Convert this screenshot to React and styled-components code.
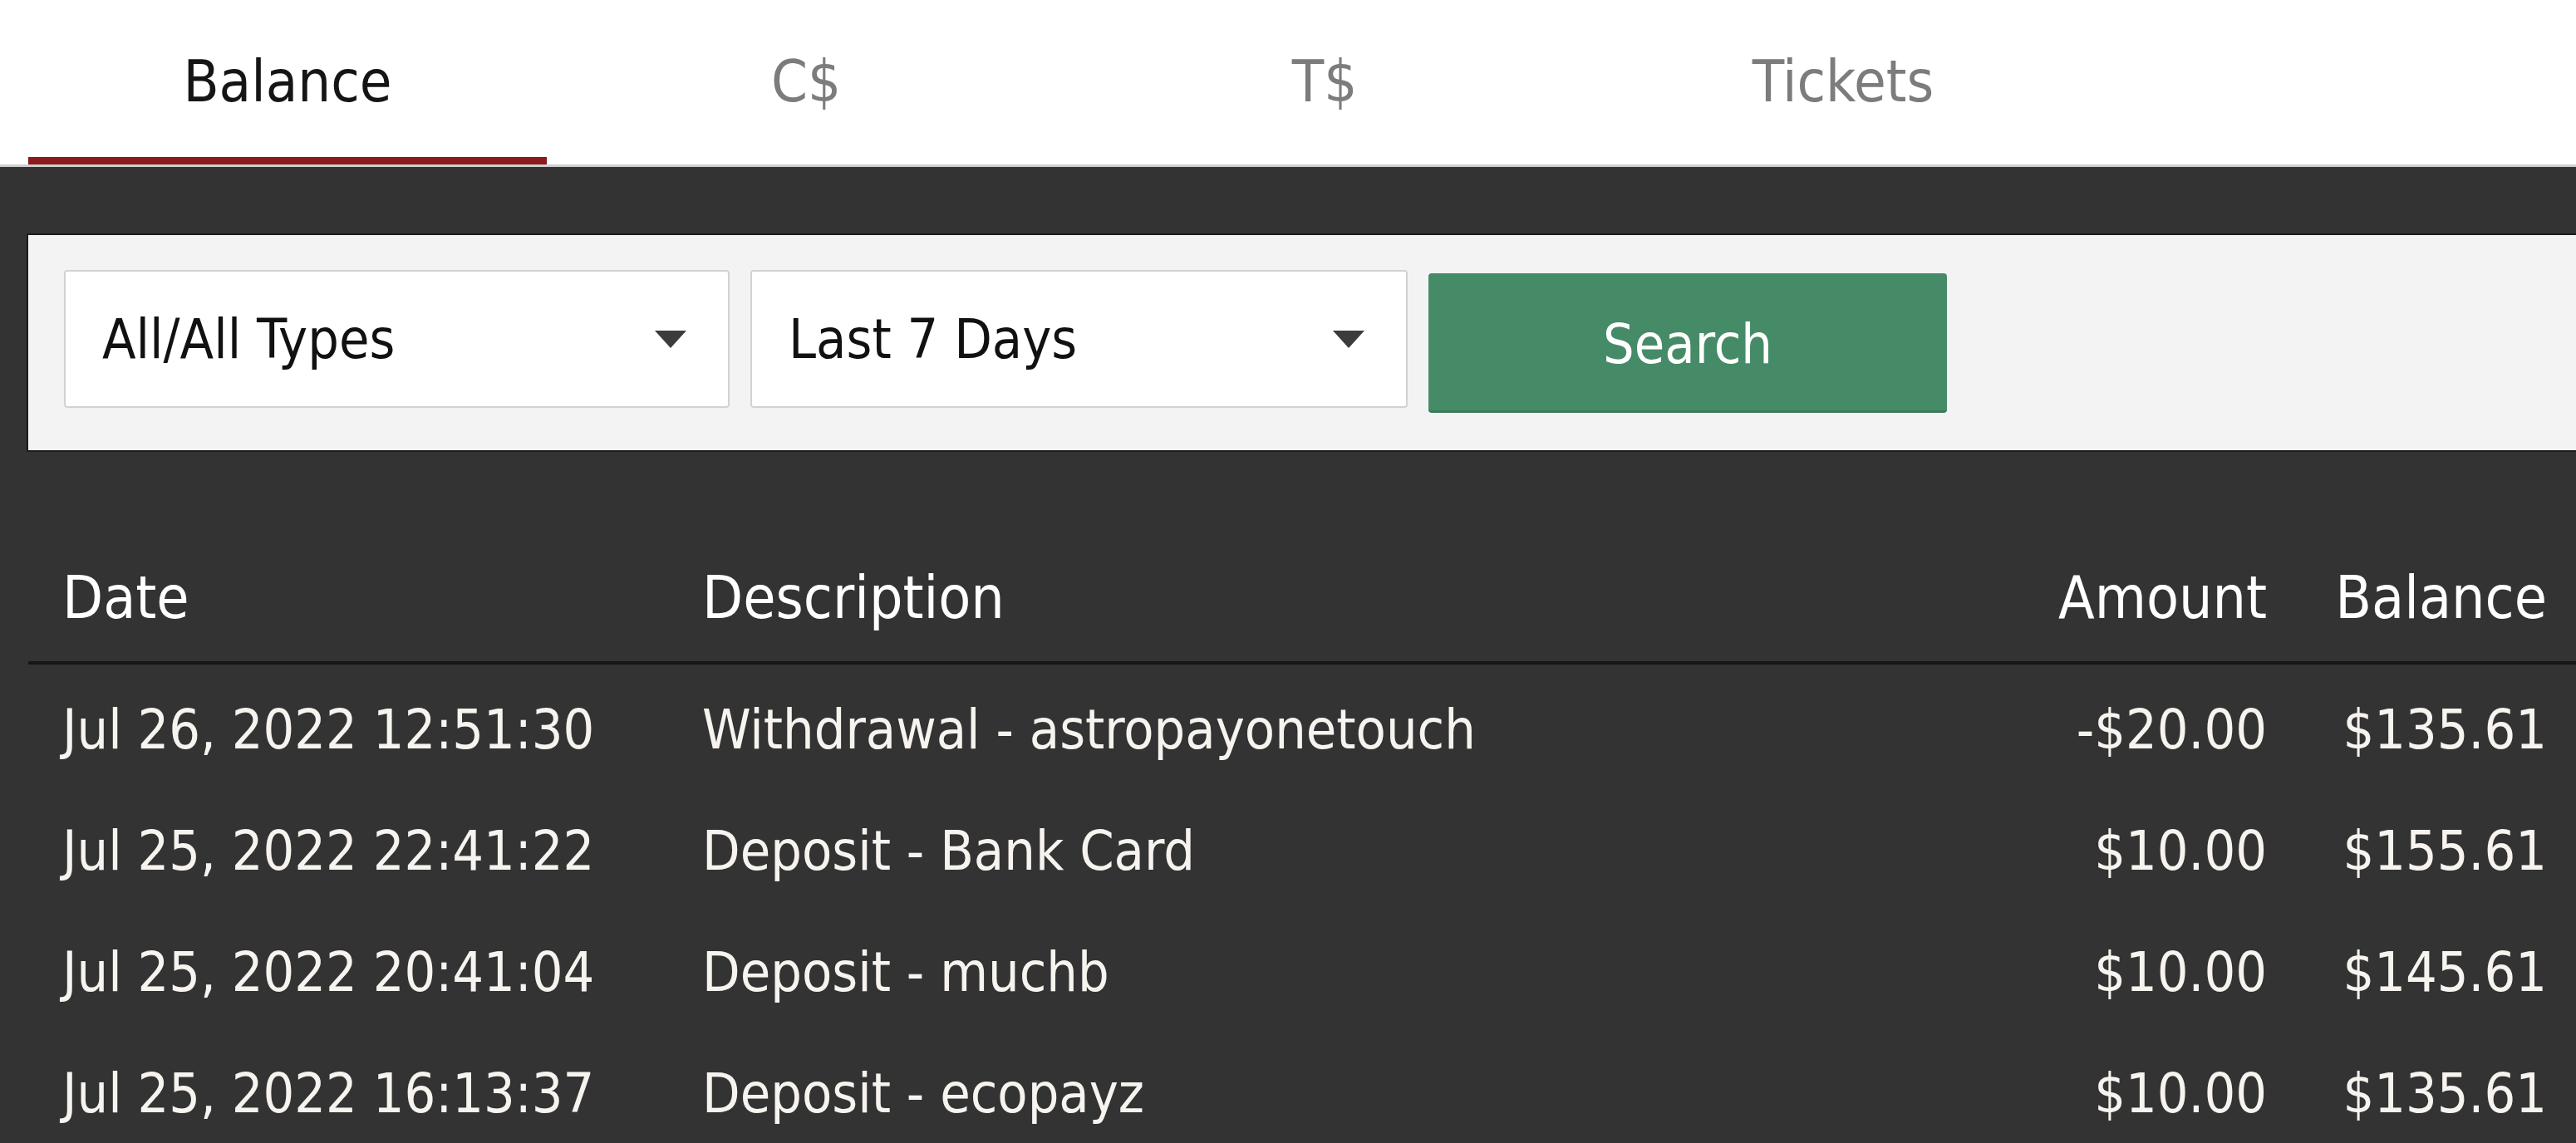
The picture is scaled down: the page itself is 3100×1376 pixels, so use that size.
import React from "react"
import styled, { createGlobalStyle } from "styled-components"

const GlobalStyle = createGlobalStyle`
  html, body {
    margin: 0;
    padding: 0;
    background: #333333;
  }
  body {
    font-family: "DejaVu Sans Condensed", "DejaVu Sans", sans-serif;
    overflow: hidden;
  }
`

const Page = styled.div`
  width: 3100px;
  height: 1376px;
  background: #333333;
  overflow: hidden;
`

const TabBar = styled.div`
  display: flex;
  padding-left: 34px;
  background: #ffffff;
  border-bottom: 3px solid #cfcfcf;
`

const Tab = styled.div`
  width: 624px;
  height: 198px;
  display: flex;
  align-items: center;
  justify-content: center;
  padding-top: 6px;
  box-sizing: border-box;
  border-bottom: 9px solid ${p => (p.$active ? "#8a1a1c" : "transparent")};
  font-size: 70px;
  color: ${p => (p.$active ? "#151515" : "#7c7c7c")};
`

const FilterPanel = styled.div`
  margin: 80px 0 0 32px;
  display: flex;
  align-items: flex-start;
  gap: 25px;
  padding: 42px 43px 45px;
  background: #f3f3f3;
  border: 2px solid #1b1b1b;
  border-right: none;
`

const Select = styled.div`
  width: ${p => p.$width}px;
  height: 166px;
  box-sizing: border-box;
  display: flex;
  align-items: center;
  justify-content: space-between;
  padding: 0 50px 0 44px;
  background: #ffffff;
  border: 2px solid #d2d2d2;
  border-radius: 4px;
  font-size: 66px;
  color: #111111;
`

const Arrow = styled.svg`
  width: 38px;
  height: 21px;
  fill: #3c3c3c;
`

const SearchButton = styled.button`
  width: 624px;
  height: 168px;
  margin-top: 4px;
  border: none;
  border-bottom: 3px solid #3b7b5a;
  border-radius: 4px;
  background: #468b67;
  color: #ffffff;
  font-family: inherit;
  font-size: 66px;
  padding: 6px 0 0;
`

const Table = styled.div`
  margin: 98px 0 0 34px;
`

const Row = styled.div`
  display: grid;
  grid-template-columns: 770px 1fr 300px 337px;
  align-items: center;
  height: ${p => (p.$head ? "154px" : "146px")};
  padding: 0 35px 0 41px;
  border-bottom: ${p => (p.$head ? "4px solid #161616" : "none")};
  margin-bottom: ${p => (p.$head ? "5px" : "0")};
  font-size: ${p => (p.$head ? "71px" : "66px")};
  color: ${p => (p.$head ? "#ffffff" : "#f7f4ef")};
  white-space: nowrap;
`

const Cell = styled.div`
  text-align: ${p => (p.$right ? "right" : "left")};
`

const rows = [
  ["Jul 26, 2022 12:51:30", "Withdrawal - astropayonetouch", "-$20.00", "$135.61"],
  ["Jul 25, 2022 22:41:22", "Deposit - Bank Card", "$10.00", "$155.61"],
  ["Jul 25, 2022 20:41:04", "Deposit - muchb", "$10.00", "$145.61"],
  ["Jul 25, 2022 16:13:37", "Deposit - ecopayz", "$10.00", "$135.61"],
]

const DropArrow = () => (
  <Arrow viewBox="0 0 38 21">
    <polygon points="0,0 38,0 19,21" />
  </Arrow>
)

export default function App() {
  return (
    <Page>
      <GlobalStyle />
      <TabBar>
        <Tab $active>Balance</Tab>
        <Tab>C$</Tab>
        <Tab>T$</Tab>
        <Tab>Tickets</Tab>
      </TabBar>
      <FilterPanel>
        <Select $width={801}>
          All/All Types
          <DropArrow />
        </Select>
        <Select $width={791}>
          Last 7 Days
          <DropArrow />
        </Select>
        <SearchButton>Search</SearchButton>
      </FilterPanel>
      <Table>
        <Row $head>
          <Cell>Date</Cell>
          <Cell>Description</Cell>
          <Cell $right>Amount</Cell>
          <Cell $right>Balance</Cell>
        </Row>
        {rows.map(r => (
          <Row key={r[0]}>
            <Cell>{r[0]}</Cell>
            <Cell>{r[1]}</Cell>
            <Cell $right>{r[2]}</Cell>
            <Cell $right>{r[3]}</Cell>
          </Row>
        ))}
      </Table>
    </Page>
  )
}
